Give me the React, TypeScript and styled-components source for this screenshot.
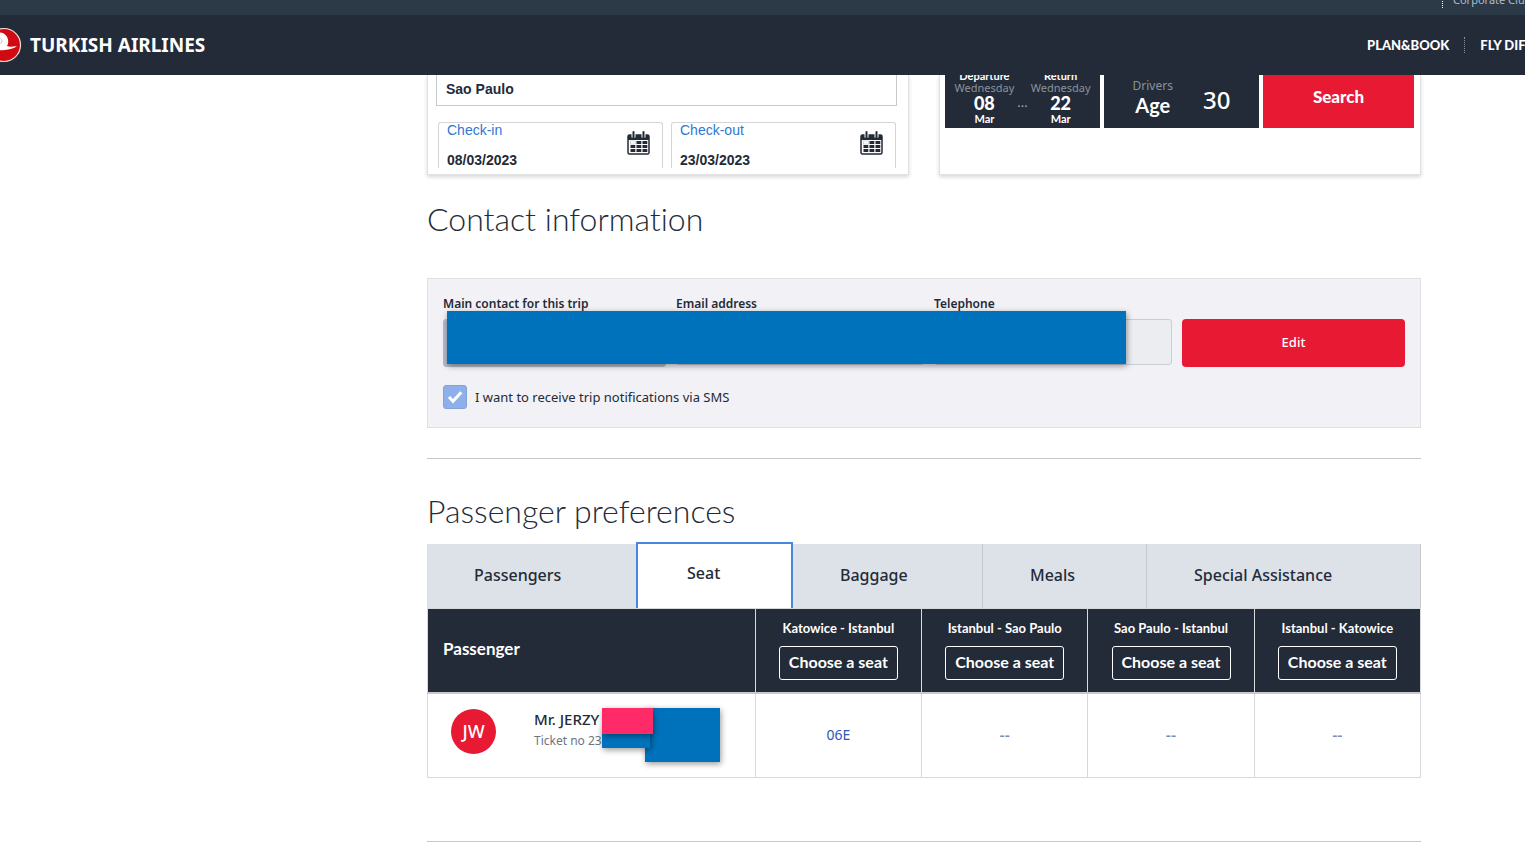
import React from "react";
import styled, { createGlobalStyle } from "styled-components";

const navy = "#232b38";
const red = "#e81932";
const blue = "#0072bc";
const line = "#c8c9cc";

const GlobalStyle = createGlobalStyle`
  *, *::before, *::after { box-sizing: border-box; }
  body {
    margin: 0;
    overflow-x: hidden;
    background: #fff;
    color: ${navy};
    font-family: "Noto Sans", sans-serif;
    font-size: 13px;
  }
  button, input { font: inherit; color: inherit; margin: 0; }
  button { cursor: pointer; }
  a { color: inherit; text-decoration: none; }
`;

/* ---------- header ---------- */

const TopBar = styled.div`
  display: flex;
  justify-content: flex-end;
  height: 15px;
  overflow: hidden;
  background: #2c3946;
`;

const TopLinks = styled.nav`
  width: 83px;
  white-space: nowrap;
  font-size: 11px;
  line-height: 16px;
  color: #b3bbc3;

  a {
    display: block;
    height: 16px;
    margin-top: -8px;
    padding-left: 10px;
    border-left: 1px dotted #fff;
  }
`;

const Header = styled.header`
  display: flex;
  align-items: center;
  justify-content: space-between;
  height: 60px;
  overflow: hidden;
  background: ${navy};
  color: #fff;
`;

const Brand = styled.a`
  display: flex;
  align-items: center;
  gap: 8px;
  margin-left: -14px;
  font-size: 19px;
  font-weight: 700;
  line-height: 24px;
`;

const MainNav = styled.nav`
  display: flex;
  align-items: center;
  width: 158px;
  overflow: hidden;
  white-space: nowrap;
  font-family: Lato, sans-serif;
  font-size: 13px;
  font-weight: 900;
  line-height: 16px;

  a + a {
    margin-left: 15px;
    padding-left: 15px;
    border-left: 1px dotted #8b929c;
  }
`;

/* ---------- page ---------- */

const Page = styled.main`
  margin: 0 104px 0 28%;
`;

const Widgets = styled.div`
  display: grid;
  grid-template-columns: 1fr 1fr;
  gap: 30px;
`;

const Card = styled.section`
  height: 100px;
  overflow: hidden;
  border: 1px solid #e2e2e4;
  border-top: 0;
`;

const CardShadow = styled.div`
  box-shadow: 0 2px 4px rgba(0, 0, 0, 0.16);
  clip-path: inset(0 -6px -8px -6px);
`;

const HotelForm = styled.form`
  padding: 0 11px 0 8px;
  font-family: "Liberation Sans", sans-serif;
  font-size: 14px;
`;

const CityInput = styled.input`
  display: block;
  width: 100%;
  height: 31px;
  padding: 0 9px 2px;
  border: 1px solid ${line};
  border-top: 0;
  background: #fff;
  font-weight: 700;
`;

const DateRow = styled.div`
  display: grid;
  grid-template-columns: 1fr 1fr;
  gap: 8px;
  margin: 16px 1px 0 2px;
`;

const DateField = styled.div`
  display: flex;
  justify-content: space-between;
  height: 46px;
  padding: 0 12px 0 8px;
  border: 1px solid #d4d5d8;
  border-bottom: 0;
  border-radius: 3px 3px 0 0;

  svg { flex: none; margin-top: 8px; }
  label { display: block; line-height: 14px; color: #2f78d0; }
  input {
    display: block;
    width: 100%;
    height: 16px;
    margin-top: 15px;
    padding: 0;
    border: 0;
    background: none;
    font-weight: 700;
  }
`;

const CarForm = styled.form`
  display: grid;
  grid-template-columns: 155fr 155fr 151fr;
  gap: 4px;
  height: 53px;
  padding: 0 6px 0 5px;
  color: #fff;
`;

const CarBox = styled.div<{ $gap: number }>`
  display: flex;
  justify-content: center;
  gap: ${(p) => p.$gap}px;
  background: ${navy};
  overflow: hidden;
`;

const TripDate = styled.div`
  margin-top: -5px;
  text-align: center;
  font-family: Lato, sans-serif;
  font-size: 11px;
  font-weight: 700;
  line-height: 12px;

  span { display: block; font-family: "Noto Sans", sans-serif; font-weight: 400; color: #8b929c; }
  strong { display: block; font-size: 18px; line-height: 19px; }
`;

const Dots = styled.div`
  align-self: center;
  color: #a5abb3;
`;

const AgeLabel = styled.div`
  padding-top: 3px;
  text-align: center;
  font-family: Lato, sans-serif;
  font-size: 20px;
  font-weight: 700;
  line-height: 22px;

  span { display: block; font-family: "Noto Sans", sans-serif; font-size: 12px; font-weight: 400; line-height: 16px; color: #8b929c; }
`;

const AgeValue = styled.div`
  padding-top: 9px;
  font-size: 24px;
  font-weight: 500;
  line-height: 32px;
`;

const SearchButton = styled.button`
  padding: 0 0 10px;
  border: 0;
  background: ${red};
  font-family: Lato, sans-serif;
  font-size: 17px;
  font-weight: 900;
`;

const Title = styled.h2`
  margin: 0;
  font-family: Lato, sans-serif;
  font-size: 32px;
  font-weight: 300;
  font-variant-ligatures: none;
  line-height: 40px;
`;

const Contact = styled.section`
  padding-top: 24px;
`;

const Panel = styled.form`
  position: relative;
  margin-top: 39px;
  padding: 16px 15px 18px;
  border: 1px solid #dfe0e3;
  background: #f2f1f6;
`;

const Fields = styled.div`
  display: grid;
  grid-template-columns: 223fr 248fr 238fr 223fr;
  gap: 10px;
`;

const Field = styled.div`
  label {
    display: block;
    margin-bottom: 6px;
    font-size: 12px;
    font-weight: 600;
    line-height: 18px;
  }
`;

const FieldInput = styled.input<{ $strong?: boolean }>`
  display: block;
  width: 100%;
  height: ${(p) => (p.$strong ? 48 : 46)}px;
  border: 1px solid ${(p) => (p.$strong ? "#b4bbc9" : "#c6ced6")};
  border-radius: 3px;
  background: ${(p) => (p.$strong ? "#b4bbc9" : "#ecedf1")};
`;

const EditButton = styled.button`
  align-self: end;
  height: 48px;
  padding: 0 0 2px;
  border: 0;
  border-radius: 4px;
  background: ${red};
  color: #fff;
  font-weight: 500;
`;

const SmsLabel = styled.label`
  display: flex;
  align-items: center;
  gap: 8px;
  width: fit-content;
  margin-top: 18px;
  line-height: 24px;
`;

const CheckBox = styled.input`
  appearance: none;
  width: 24px;
  height: 24px;
  border: 1px solid #86a2d4;
  border-radius: 3px;
  background: #8db0ec;
`;

const CheckWrap = styled.span`
  position: relative;
  display: flex;

  svg { position: absolute; inset: 0; pointer-events: none; }
`;

const Mask = styled.div`
  position: absolute;
  background: ${blue};
  box-shadow: 1px 2px 6px rgba(0, 0, 0, 0.4);
`;

const ContactMask = styled(Mask)`
  top: 32px;
  left: 19px;
  width: 679px;
  height: 53px;
`;

const Rule = styled.hr<{ $space?: number }>`
  height: 1px;
  margin: ${(p) => p.$space ?? 0}px 0 0;
  border: 0;
  background: #c6c7c9;
`;

const Preferences = styled.section`
  padding: 32px 0 63px;
`;

const Tabs = styled.div`
  display: grid;
  grid-template-columns: 209fr 157fr 190fr 164fr 274fr;
  align-items: end;
  margin-top: 11px;
`;

const Tab = styled.button<{ $active?: boolean; $divided?: boolean }>`
  height: ${(p) => (p.$active ? 66 : 64)}px;
  padding: ${(p) => (p.$active ? "0 0 7px 49px" : "0 0 2px 47px")};
  border: 0 solid ${line};
  border-right-width: ${(p) => (p.$divided ? 1 : 0)}px;
  background: #dde2e8;
  text-align: left;
  white-space: nowrap;
  font-size: 16px;
  font-weight: 500;
  ${(p) =>
    p.$active &&
    `border: 2px solid #4a86dd; border-bottom: 0; background: #fff;`}
`;

const SeatTable = styled.table`
  width: 100%;
  table-layout: fixed;
  border-collapse: collapse;

  th, td { padding: 0; border: 1px solid #d8d9dc; text-align: center; }
  th { height: 84px; border-bottom: 2px solid ${line}; background: ${navy}; color: #fff; font-family: Lato, sans-serif; font-size: 13px; font-weight: 700; line-height: 16px; }
  td { height: 84px; padding-bottom: 1px; font-size: 14px; color: #2c56b4; }
  th:first-child { width: 33%; padding: 0 0 2px 15px; text-align: left; font-size: 17px; }
`;

const SeatButton = styled.button`
  display: block;
  height: 34px;
  margin: 10px auto 0;
  padding: 0 9px 2px;
  border: 1px solid #fff;
  border-radius: 3px;
  background: none;
  white-space: nowrap;
  font-size: 16px;
  font-weight: 700;
`;

const Traveller = styled.div`
  position: relative;
  display: flex;
  gap: 38px;
  height: 82px;
  padding: 15px 0 0 23px;
  text-align: left;
`;

const Avatar = styled.div`
  width: 45px;
  height: 45px;
  border-radius: 50%;
  background: ${red};
  color: #fff;
  text-align: center;
  font-size: 18px;
  font-weight: 500;
  line-height: 45px;
`;

const Name = styled.div`
  font-size: 15px;
  font-weight: 500;
  line-height: 20px;
  color: ${navy};

  span { display: block; margin-top: 2px; font-size: 12px; font-weight: 400; color: #6b7682; }
`;

const BlockMask = styled(Mask)`
  top: 14px;
  left: 217px;
  width: 75px;
  height: 54px;
`;

const TicketMask = styled(Mask)`
  top: 34px;
  left: 174px;
  width: 48px;
  height: 20px;
`;

const NameMask = styled(Mask)`
  top: 14px;
  left: 174px;
  width: 51px;
  height: 26px;
  background: #ff2b68;
`;

const Dash = styled.span`
  font-size: 16px;
  font-weight: 500;
  color: #8089b8;
`;

const Emblem = () => (
  <svg width="36" height="36" viewBox="0 0 36 36" aria-hidden="true">
    <circle cx="18" cy="18" r="16.5" fill="#d10a11" stroke="#f2dede" strokeWidth="1.2" />
    <path
      d="M3 10C9 4 17 4 20.500 9c2.500 4 2 7.500.5 10 3 1.200 6 .4 10 0-3 2.600-8 3.400-12 4C12 24 5 22 2 19z"
      fill="#fff"
    />
    <path d="M13 11c2 0 3 1.500 3 3s-1 3-3 3" fill="none" stroke="#d9c3c6" strokeWidth="1" />
  </svg>
);

const slots = [10, 14, 18].flatMap((y) => [4, 10, 16].map((x) => ({ x, y })));

const CalendarIcon = () => (
  <svg width="23" height="24" viewBox="0 0 23 24" aria-hidden="true">
    <rect x="1" y="4" width="21" height="19" rx="1.500" fill="#fff" stroke={navy} strokeWidth="1.500" />
    <path d="M1 4h21v5H1z" fill={navy} />
    <path d="M6.500 1v5.500M16.500 1v5.500" stroke="#fff" strokeWidth="4" />
    <path d="M6.500 1v5M16.500 1v5" stroke={navy} strokeWidth="2" strokeLinecap="round" />
    {slots.map(({ x, y }, i) => (
      <rect
        key={i}
        x={x - 0.5}
        y={y}
        width="4.800"
        height="3"
        fill={i ? navy : "#fff"}
        stroke={i ? "none" : "#b9bcc1"}
        strokeWidth=".6"
      />
    ))}
  </svg>
);

const CheckMark = () => (
  <svg width="24" height="24" viewBox="0 0 24 24" aria-hidden="true">
    <path d="M6 12l4 4.300L18.300 7.300" fill="none" stroke="#fff" strokeWidth="3" />
  </svg>
);

const flights = [
  { route: "Katowice - Istanbul", seat: "06E" },
  { route: "Istanbul - Sao Paulo", seat: null },
  { route: "Sao Paulo - Istanbul", seat: null },
  { route: "Istanbul - Katowice", seat: null },
];

const stays = [
  { id: "check-in", label: "Check-in", date: "08/03/2023" },
  { id: "check-out", label: "Check-out", date: "23/03/2023" },
];

export default function App() {
  return (
    <>
      <GlobalStyle />
      <TopBar>
        <TopLinks>
          <a href="#corporate">Corporate Club</a>
        </TopLinks>
      </TopBar>
      <Header>
        <Brand href="#home">
          <Emblem />
          TURKISH AIRLINES
        </Brand>
        <MainNav>
          <a href="#plan">PLAN&amp;BOOK</a>
          <a href="#fly">FLY DIFFERENT</a>
        </MainNav>
      </Header>

      <Page>
        <Widgets>
          <CardShadow>
            <Card>
              <HotelForm>
                <CityInput aria-label="City" defaultValue="Sao Paulo" />
                <DateRow>
                  {stays.map((s) => (
                    <DateField key={s.id}>
                      <div>
                        <label htmlFor={s.id}>{s.label}</label>
                        <input id={s.id} defaultValue={s.date} />
                      </div>
                      <CalendarIcon />
                    </DateField>
                  ))}
                </DateRow>
              </HotelForm>
            </Card>
          </CardShadow>
          <CardShadow>
            <Card>
              <CarForm>
                <CarBox $gap={3}>
                  <TripDate>
                    Departure<span>Wednesday</span>
                    <strong>08</strong>Mar
                  </TripDate>
                  <Dots>...</Dots>
                  <TripDate>
                    Return<span>Wednesday</span>
                    <strong>22</strong>Mar
                  </TripDate>
                </CarBox>
                <CarBox $gap={30}>
                  <AgeLabel>
                    <span>Drivers</span>Age
                  </AgeLabel>
                  <AgeValue>30</AgeValue>
                </CarBox>
                <SearchButton type="button">Search</SearchButton>
              </CarForm>
            </Card>
          </CardShadow>
        </Widgets>

        <Contact>
          <Title>Contact information</Title>
          <Panel>
            <Fields>
              <Field>
                <label htmlFor="contact">Main contact for this trip</label>
                <FieldInput id="contact" $strong readOnly />
              </Field>
              <Field>
                <label htmlFor="email">Email address</label>
                <FieldInput id="email" readOnly />
              </Field>
              <Field>
                <label htmlFor="phone">Telephone</label>
                <FieldInput id="phone" readOnly />
              </Field>
              <EditButton type="button">Edit</EditButton>
            </Fields>
            <SmsLabel>
              <CheckWrap>
                <CheckBox type="checkbox" defaultChecked />
                <CheckMark />
              </CheckWrap>
              I want to receive trip notifications via SMS
            </SmsLabel>
            <ContactMask />
          </Panel>
        </Contact>
        <Rule $space={30} />

        <Preferences>
          <Title>Passenger preferences</Title>
          <Tabs role="tablist">
            <Tab role="tab">Passengers</Tab>
            <Tab role="tab" $active aria-selected>Seat</Tab>
            <Tab role="tab" $divided>Baggage</Tab>
            <Tab role="tab" $divided>Meals</Tab>
            <Tab role="tab" $divided>Special Assistance</Tab>
          </Tabs>
          <SeatTable>
            <thead>
              <tr>
                <th scope="col">Passenger</th>
                {flights.map((f) => (
                  <th scope="col" key={f.route}>
                    {f.route}
                    <SeatButton type="button">Choose a seat</SeatButton>
                  </th>
                ))}
              </tr>
            </thead>
            <tbody>
              <tr>
                <td>
                  <Traveller>
                    <Avatar>JW</Avatar>
                    <Name>
                      Mr. JERZY
                      <span>Ticket no 23</span>
                    </Name>
                    <BlockMask />
                    <TicketMask />
                    <NameMask />
                  </Traveller>
                </td>
                {flights.map((f) => (
                  <td key={f.route}>{f.seat ?? <Dash>--</Dash>}</td>
                ))}
              </tr>
            </tbody>
          </SeatTable>
        </Preferences>
        <Rule />
      </Page>
    </>
  );
}
